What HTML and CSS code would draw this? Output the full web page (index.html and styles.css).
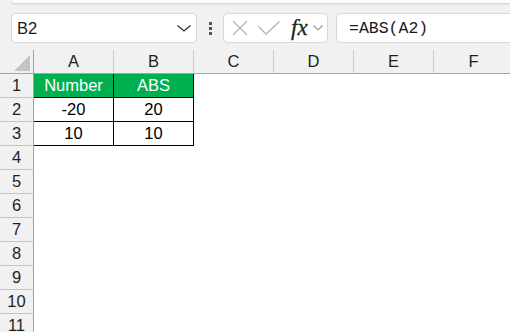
FILE: index.html
```html
<!DOCTYPE html>
<html lang="en">
<head>
    <meta charset="UTF-8">
    <title>ABS</title>
    <link rel="stylesheet" href="styles.css">
</head>
<body>
    <div class="topbar">
        <div class="ribbon-edge"></div>
        <div class="formula-row">
            <div class="name-box">
                <span>B2</span>
                <svg class="name-arrow" width="14" height="7" viewBox="0 0 14 7"><polyline points="0.5,0.5 7,6 13.5,0.5" fill="none" stroke="#333" stroke-width="1.3"/></svg>
            </div>
            <div class="dots"><i></i><i></i><i></i></div>
            <div class="fx-box">
                <svg width="16" height="16" viewBox="0 0 16 16"><path d="M1 1 L15 15 M15 1 L1 15" stroke="#b5b5b5" stroke-width="1.3" fill="none"/></svg>
                <svg width="22" height="14" viewBox="0 0 22 14"><polyline points="0.5,5.5 8,13 21.5,0.5" fill="none" stroke="#b5b5b5" stroke-width="1.3"/></svg>
                <span class="fx">fx</span>
                <svg width="10" height="6" viewBox="0 0 10 6"><polyline points="0.5,0.5 5,5 9.5,0.5" fill="none" stroke="#999" stroke-width="1.2"/></svg>
            </div>
            <div class="formula">=ABS(A2)</div>
        </div>
    </div>

    <div class="sheet">
        <div class="corner"><span class="tri"></span></div>
        <div class="col-head">A</div>
        <div class="col-head">B</div>
        <div class="col-head">C</div>
        <div class="col-head">D</div>
        <div class="col-head">E</div>
        <div class="col-head">F</div>

        <div class="row-head">1</div>
        <div class="cell t green">Number</div>
        <div class="cell t green">ABS</div>
        <div class="cell"></div><div class="cell"></div><div class="cell"></div><div class="cell"></div>

        <div class="row-head">2</div>
        <div class="cell t">-20</div>
        <div class="cell t">20</div>
        <div class="cell"></div><div class="cell"></div><div class="cell"></div><div class="cell"></div>

        <div class="row-head">3</div>
        <div class="cell t">10</div>
        <div class="cell t">10</div>
        <div class="cell"></div><div class="cell"></div><div class="cell"></div><div class="cell"></div>

        <div class="row-head">4</div>
        <div class="cell"></div><div class="cell"></div><div class="cell"></div><div class="cell"></div><div class="cell"></div><div class="cell"></div>
        <div class="row-head">5</div>
        <div class="cell"></div><div class="cell"></div><div class="cell"></div><div class="cell"></div><div class="cell"></div><div class="cell"></div>
        <div class="row-head">6</div>
        <div class="cell"></div><div class="cell"></div><div class="cell"></div><div class="cell"></div><div class="cell"></div><div class="cell"></div>
        <div class="row-head">7</div>
        <div class="cell"></div><div class="cell"></div><div class="cell"></div><div class="cell"></div><div class="cell"></div><div class="cell"></div>
        <div class="row-head">8</div>
        <div class="cell"></div><div class="cell"></div><div class="cell"></div><div class="cell"></div><div class="cell"></div><div class="cell"></div>
        <div class="row-head">9</div>
        <div class="cell"></div><div class="cell"></div><div class="cell"></div><div class="cell"></div><div class="cell"></div><div class="cell"></div>
        <div class="row-head">10</div>
        <div class="cell"></div><div class="cell"></div><div class="cell"></div><div class="cell"></div><div class="cell"></div><div class="cell"></div>
        <div class="row-head">11</div>
        <div class="cell"></div><div class="cell"></div><div class="cell"></div><div class="cell"></div><div class="cell"></div><div class="cell"></div>
    </div>
</body>
</html>
```

FILE: styles.css
```css
* {
    box-sizing: border-box;
}
body {
    margin: 0;
    width: 510px;
    height: 332px;
    overflow: hidden;
    background: #fff;
    font-family: "Liberation Sans", Arial, sans-serif;
    color: #1f1f1f;
}
.topbar {
    height: 50px;
    background: #f1f1f1;
}
.ribbon-edge {
    height: 3px;
    margin-left: 12px;
    background: #fff;
    border-bottom-left-radius: 6px;
    box-shadow: 0 1px 2px rgba(0, 0, 0, 0.15);
}
.formula-row {
    display: flex;
    align-items: center;
    padding: 10px 0 0 11px;
}
.name-box {
    width: 186px;
    height: 30px;
    display: flex;
    align-items: center;
    justify-content: space-between;
    padding: 0 5px 0 5px;
    background: #fff;
    border: 1px solid #d8d8d8;
    border-radius: 5px;
    font-size: 16.5px;
    color: #1a1a1a;
}
.dots {
    display: flex;
    flex-direction: column;
    gap: 2px;
    margin-left: 12px;
    width: 3px;
}
.dots i {
    display: block;
    width: 3px;
    height: 3px;
    background: #555;
}
.fx-box {
    display: flex;
    align-items: center;
    width: 105px;
    height: 30px;
    margin-left: 11px;
    padding-left: 8px;
    background: #fff;
    border: 1px solid #d8d8d8;
    border-radius: 5px;
}
.fx-box svg:nth-child(2) {
    margin-left: 10px;
}
.fx {
    margin-left: 11px;
    font-family: "Liberation Serif", serif;
    font-style: italic;
    font-size: 23px;
    color: #222;
    line-height: 1;
    padding-bottom: 2px;
    -webkit-text-stroke: 0.3px #222;
}
.fx-box svg:last-child {
    margin-left: 5px;
}
.formula {
    flex: 1;
    height: 30px;
    margin-left: 8px;
    margin-right: -10px;
    padding-left: 12px;
    display: flex;
    align-items: center;
    background: #fff;
    border: 1px solid #d8d8d8;
    border-radius: 5px;
    font-family: "Liberation Mono", monospace;
    font-size: 16.5px;
    color: #1a1a1a;
}
.sheet {
    display: grid;
    grid-template-columns: 34px repeat(6, 80px);
    grid-auto-rows: 24px;
    font-size: 16.5px;
}
.corner {
    display: flex;
    align-items: flex-end;
    justify-content: flex-end;
    padding: 0 3px 2px 0;
    background: #f1f1f1;
    border-right: 1px solid #a3a3a3;
    border-bottom: 1px solid #a3a3a3;
}
.tri {
    width: 0;
    height: 0;
    border-left: 16px solid transparent;
    border-bottom: 16px solid #c4c4c4;
}
.col-head {
    display: flex;
    align-items: center;
    justify-content: center;
    background: #f1f1f1;
    border-right: 1px solid #c9c9c9;
    border-bottom: 1px solid #a3a3a3;
}
.row-head {
    display: flex;
    align-items: center;
    justify-content: center;
    background: #f1f1f1;
    border-right: 1px solid #a3a3a3;
    border-bottom: 1px solid #c3c3c3;
}
.cell {
    display: flex;
    align-items: center;
    justify-content: center;
    color: #000;
}
.t {
    border-right: 1px solid #000;
    border-bottom: 1px solid #000;
}
.green {
    background: #00b050;
    color: #fff;
}
```
